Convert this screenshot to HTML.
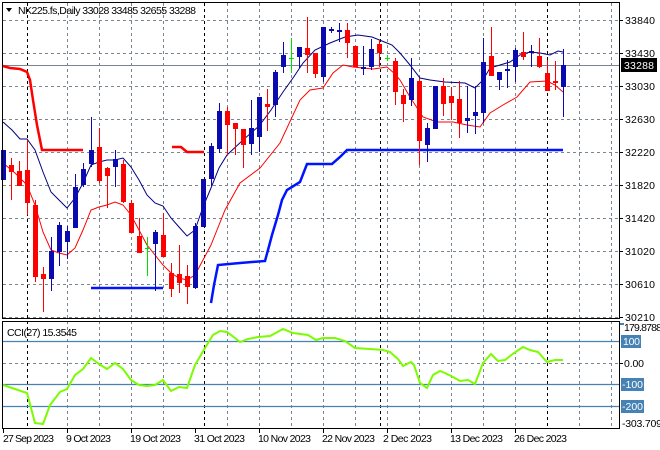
<!DOCTYPE html>
<html><head><meta charset="utf-8"><style>
html,body{margin:0;padding:0;background:#fff;}
svg{display:block;font-family:"Liberation Sans",sans-serif;font-size:10.5px;}
.g{stroke:#7a8590;stroke-width:1;stroke-dasharray:3,3;}
.k{stroke:#000;stroke-width:1;stroke-dasharray:3,3;}
.b{fill:#0a0ab0;}.r{fill:#ff0000;}
.wb{stroke:#0a0ab0;}.wr{stroke:#ff0000;}.wg{stroke:#00e000;}
</style></head><body>
<svg width="660" height="450" viewBox="0 0 660 450" xmlns="http://www.w3.org/2000/svg">
<rect width="660" height="450" fill="#fff"/>
<g class="g">
<line x1="3" y1="20.5" x2="619" y2="20.5"/><line x1="3" y1="53.5" x2="619" y2="53.5"/><line x1="3" y1="86.5" x2="619" y2="86.5"/><line x1="3" y1="119.5" x2="619" y2="119.5"/><line x1="3" y1="152.5" x2="619" y2="152.5"/><line x1="3" y1="185.5" x2="619" y2="185.5"/><line x1="3" y1="218.5" x2="619" y2="218.5"/><line x1="3" y1="251.5" x2="619" y2="251.5"/><line x1="3" y1="284.5" x2="619" y2="284.5"/><line x1="3" y1="317.5" x2="619" y2="317.5"/>
<line x1="3" y1="363.5" x2="619" y2="363.5"/>
</g>
<g class="g">
<line x1="67.5" y1="3" x2="67.5" y2="428"/><line x1="99.5" y1="3" x2="99.5" y2="428"/><line x1="131.5" y1="3" x2="131.5" y2="428"/><line x1="163.5" y1="3" x2="163.5" y2="428"/><line x1="227.5" y1="3" x2="227.5" y2="428"/><line x1="259.5" y1="3" x2="259.5" y2="428"/><line x1="291.5" y1="3" x2="291.5" y2="428"/><line x1="323.5" y1="3" x2="323.5" y2="428"/><line x1="355.5" y1="3" x2="355.5" y2="428"/><line x1="387.5" y1="3" x2="387.5" y2="428"/><line x1="419.5" y1="3" x2="419.5" y2="428"/><line x1="451.5" y1="3" x2="451.5" y2="428"/><line x1="483.5" y1="3" x2="483.5" y2="428"/><line x1="515.5" y1="3" x2="515.5" y2="428"/><line x1="579.5" y1="3" x2="579.5" y2="428"/><line x1="611.5" y1="3" x2="611.5" y2="428"/>
</g>
<g class="k">
<line x1="27.5" y1="3" x2="27.5" y2="428"/><line x1="204.5" y1="3" x2="204.5" y2="428"/><line x1="380.5" y1="3" x2="380.5" y2="428"/><line x1="547.5" y1="3" x2="547.5" y2="428"/>
</g>
<line x1="3" y1="65.5" x2="619" y2="65.5" stroke="#7a8590" stroke-width="1"/>
<g stroke="#4682b4" stroke-width="1.2">
<line x1="3" y1="341.5" x2="619" y2="341.5"/><line x1="3" y1="384.5" x2="619" y2="384.5"/><line x1="3" y1="406.5" x2="619" y2="406.5"/>
</g>
<polyline fill="none" stroke="#ff0000" stroke-width="2.5" points="3,66 10,68 20,69 27,72 30,80 33,100 37,125 42,150 83,150"/>
<polyline fill="none" stroke="#ff0000" stroke-width="2.5" points="172,147 181,147 187,152 204,152"/>
<polyline fill="none" stroke="#0014ff" stroke-width="2.5" points="91,288 163,288"/>
<polyline fill="none" stroke="#0014ff" stroke-width="2.5" points="211,303 214,285 218,265 240,263 265,261 268,250 272,235 278,215 282,200 287,190 300,182 307,164 332,164 340,157 347,150 563,150"/>
<polyline fill="none" stroke="#000080" stroke-width="1" points="3,122 12,130 20,139 27,139 35,150 43,172 51,192 59,200 67,208 75,198 83,183 91,165 99,162 107,160 115,160 123,158 131,167 139,180 147,195 155,203 163,206 171,218 179,227 187,236 195,230 203,207 211,188 219,168 227,155 243,140 259,126 271,110 283,92 293,78 303,63 315,50 330,43 345,37 358,35 372,37 382,41 392,45 400,53 410,65 420,78 430,80 445,82 465,83 475,88 483,80 490,68 500,65 510,62 520,55 530,52 540,53 550,55 558,51 563,52"/>
<polyline fill="none" stroke="#ff0000" stroke-width="1" points="3,163 15,173 27,185 35,205 43,232 51,250 59,253 67,255 75,248 83,230 91,210 99,207 107,205 115,202 123,205 131,215 139,230 147,245 155,255 163,265 171,273 179,278 187,280 195,275 203,260 211,245 219,225 225,210 240,183 260,168 280,143 300,100 310,90 323,88 333,73 343,65 353,67 373,69 387,67 395,74 400,80 410,97 423,117 437,122 453,122 467,125 480,127 490,113 503,105 517,97 530,82 547,81 555,85 563,92"/>
<g stroke-width="1">
<line class="wb" x1="3.5" y1="150" x2="3.5" y2="180"/><rect class="b" x="1" y="150" width="5" height="30"/>
<line class="wr" x1="11.5" y1="158" x2="11.5" y2="200"/><rect class="r" x="9" y="165" width="5" height="7"/>
<line class="wr" x1="19.5" y1="161" x2="19.5" y2="186"/><rect class="r" x="17" y="171" width="5" height="15"/>
<line class="wr" x1="27.5" y1="140" x2="27.5" y2="215"/><rect class="r" x="25" y="170" width="5" height="33"/>
<line class="wr" x1="35.5" y1="200" x2="35.5" y2="282"/><rect class="r" x="33" y="205" width="5" height="72"/>
<line class="wr" x1="43.5" y1="267" x2="43.5" y2="312"/><rect class="r" x="41" y="274" width="5" height="5"/>
<line class="wb" x1="51.5" y1="237" x2="51.5" y2="291"/><rect class="b" x="49" y="251" width="5" height="28"/>
<line class="wb" x1="59.5" y1="222" x2="59.5" y2="266"/><rect class="b" x="57" y="225" width="5" height="27"/>
<line class="wb" x1="67.5" y1="226" x2="67.5" y2="259"/><rect class="b" x="65" y="231" width="5" height="11"/>
<line class="wb" x1="75.5" y1="174" x2="75.5" y2="228"/><rect class="b" x="73" y="187" width="5" height="41"/>
<line class="wb" x1="83.5" y1="163" x2="83.5" y2="187"/><rect class="b" x="81" y="169" width="5" height="16"/>
<line class="wb" x1="91.5" y1="117" x2="91.5" y2="167"/><rect class="b" x="89" y="150" width="5" height="14"/>
<line class="wr" x1="99.5" y1="128" x2="99.5" y2="183"/><rect class="r" x="97" y="147" width="5" height="34"/>
<line class="wr" x1="107.5" y1="167" x2="107.5" y2="208"/><rect class="r" x="105" y="168" width="5" height="8"/>
<line class="wb" x1="115.5" y1="150" x2="115.5" y2="187"/><rect class="b" x="113" y="159" width="5" height="8"/>
<line class="wr" x1="123.5" y1="160" x2="123.5" y2="203"/><rect class="r" x="121" y="164" width="5" height="38"/>
<line class="wr" x1="131.5" y1="200" x2="131.5" y2="233"/><rect class="r" x="129" y="203" width="5" height="30"/>
<line class="wr" x1="139.5" y1="218" x2="139.5" y2="253"/><rect class="r" x="137" y="236" width="5" height="17"/>
<line class="wg" x1="147.5" y1="237" x2="147.5" y2="276"/><line class="wg" x1="145" y1="248.5" x2="150" y2="248.5"/>
<line class="wb" x1="155.5" y1="230" x2="155.5" y2="291"/><rect class="b" x="153" y="232" width="5" height="12"/>
<line class="wr" x1="163.5" y1="213" x2="163.5" y2="257"/><rect class="r" x="161" y="235" width="5" height="22"/>
<line class="wr" x1="171.5" y1="263" x2="171.5" y2="297"/><rect class="r" x="169" y="273" width="5" height="16"/>
<line class="wr" x1="179.5" y1="245" x2="179.5" y2="293"/><rect class="r" x="177" y="274" width="5" height="9"/>
<line class="wr" x1="187.5" y1="265" x2="187.5" y2="304"/><rect class="r" x="185" y="276" width="5" height="11"/>
<line class="wb" x1="195.5" y1="223" x2="195.5" y2="289"/><rect class="b" x="193" y="226" width="5" height="62"/>
<line class="wb" x1="203.5" y1="179" x2="203.5" y2="227"/><rect class="b" x="201" y="179" width="5" height="48"/>
<line class="wb" x1="211.5" y1="143" x2="211.5" y2="187"/><rect class="b" x="209" y="146" width="5" height="33"/>
<line class="wb" x1="219.5" y1="103" x2="219.5" y2="153"/><rect class="b" x="217" y="111" width="5" height="38"/>
<line class="wr" x1="227.5" y1="107" x2="227.5" y2="155"/><rect class="r" x="225" y="111" width="5" height="14"/>
<line class="wr" x1="235.5" y1="123" x2="235.5" y2="155"/><rect class="r" x="233" y="123" width="5" height="6"/>
<line class="wr" x1="243.5" y1="129" x2="243.5" y2="168"/><rect class="r" x="241" y="129" width="5" height="16"/>
<line class="wb" x1="251.5" y1="100" x2="251.5" y2="155"/><rect class="b" x="249" y="128" width="5" height="16"/>
<line class="wb" x1="259.5" y1="97" x2="259.5" y2="152"/><rect class="b" x="257" y="97" width="5" height="40"/>
<line class="wr" x1="267.5" y1="89" x2="267.5" y2="131"/><rect class="r" x="265" y="104" width="5" height="3"/>
<line class="wb" x1="275.5" y1="70" x2="275.5" y2="117"/><rect class="b" x="273" y="72" width="5" height="33"/>
<line class="wb" x1="283.5" y1="42" x2="283.5" y2="73"/><rect class="b" x="281" y="55" width="5" height="12"/>
<line class="wg" x1="291.5" y1="38" x2="291.5" y2="73"/><line class="wg" x1="289" y1="58.5" x2="294" y2="58.5"/>
<line class="wb" x1="299.5" y1="47" x2="299.5" y2="68"/><rect class="b" x="297" y="47" width="5" height="10"/>
<line class="wr" x1="307.5" y1="17" x2="307.5" y2="73"/><rect class="r" x="305" y="48" width="5" height="7"/>
<line class="wr" x1="315.5" y1="53" x2="315.5" y2="78"/><rect class="r" x="313" y="53" width="5" height="21"/>
<line class="wb" x1="323.5" y1="27" x2="323.5" y2="82"/><rect class="b" x="321" y="27" width="5" height="50"/>
<line class="wb" x1="331.5" y1="27" x2="331.5" y2="33"/><rect class="b" x="329" y="29" width="5" height="2"/>
<line class="wb" x1="339.5" y1="23" x2="339.5" y2="42"/><rect class="b" x="337" y="30" width="5" height="2"/>
<line class="wr" x1="347.5" y1="23" x2="347.5" y2="58"/><rect class="r" x="345" y="30" width="5" height="13"/>
<line class="wr" x1="355.5" y1="46" x2="355.5" y2="67"/><rect class="r" x="353" y="46" width="5" height="21"/>
<line class="wb" x1="363.5" y1="46" x2="363.5" y2="75"/><rect class="b" x="361" y="67" width="5" height="2"/>
<line class="wb" x1="371.5" y1="39" x2="371.5" y2="70"/><rect class="b" x="369" y="49" width="5" height="18"/>
<line class="wr" x1="379.5" y1="40" x2="379.5" y2="67"/><rect class="r" x="377" y="44" width="5" height="9"/>
<line class="wg" x1="387.5" y1="55" x2="387.5" y2="61"/><line class="wg" x1="385" y1="58.5" x2="390" y2="58.5"/>
<line class="wr" x1="395.5" y1="58" x2="395.5" y2="105"/><rect class="r" x="393" y="61" width="5" height="31"/>
<line class="wr" x1="403.5" y1="89" x2="403.5" y2="122"/><rect class="r" x="401" y="95" width="5" height="9"/>
<line class="wb" x1="411.5" y1="58" x2="411.5" y2="106"/><rect class="b" x="409" y="78" width="5" height="22"/>
<line class="wr" x1="419.5" y1="78" x2="419.5" y2="165"/><rect class="r" x="417" y="81" width="5" height="60"/>
<line class="wb" x1="427.5" y1="123" x2="427.5" y2="162"/><rect class="b" x="425" y="128" width="5" height="17"/>
<line class="wb" x1="435.5" y1="86" x2="435.5" y2="129"/><rect class="b" x="433" y="86" width="5" height="43"/>
<line class="wr" x1="443.5" y1="78" x2="443.5" y2="116"/><rect class="r" x="441" y="86" width="5" height="18"/>
<line class="wr" x1="451.5" y1="87" x2="451.5" y2="120"/><rect class="r" x="449" y="96" width="5" height="7"/>
<line class="wr" x1="459.5" y1="81" x2="459.5" y2="138"/><rect class="r" x="457" y="99" width="5" height="24"/>
<line class="wb" x1="467.5" y1="86" x2="467.5" y2="133"/><rect class="b" x="465" y="118" width="5" height="3"/>
<line class="wb" x1="475.5" y1="86" x2="475.5" y2="134"/><rect class="b" x="473" y="112" width="5" height="4"/>
<line class="wb" x1="483.5" y1="38" x2="483.5" y2="123"/><rect class="b" x="481" y="62" width="5" height="51"/>
<line class="wr" x1="491.5" y1="27" x2="491.5" y2="76"/><rect class="r" x="489" y="56" width="5" height="20"/>
<line class="wb" x1="499.5" y1="72" x2="499.5" y2="90"/><rect class="b" x="497" y="72" width="5" height="8"/>
<line class="wb" x1="507.5" y1="60" x2="507.5" y2="88"/><rect class="b" x="505" y="69" width="5" height="2"/>
<line class="wb" x1="515.5" y1="48" x2="515.5" y2="82"/><rect class="b" x="513" y="50" width="5" height="17"/>
<line class="wr" x1="523.5" y1="32" x2="523.5" y2="60"/><rect class="r" x="521" y="52" width="5" height="5"/>
<line class="wb" x1="531.5" y1="45" x2="531.5" y2="67"/><rect class="b" x="529" y="51" width="5" height="2"/>
<line class="wr" x1="539.5" y1="38" x2="539.5" y2="68"/><rect class="r" x="537" y="56" width="5" height="11"/>
<line class="wr" x1="547.5" y1="60" x2="547.5" y2="91"/><rect class="r" x="545" y="73" width="5" height="18"/>
<line class="wr" x1="555.5" y1="61" x2="555.5" y2="90"/><rect class="r" x="553" y="81" width="5" height="2"/>
<line class="wb" x1="563.5" y1="49" x2="563.5" y2="117"/><rect class="b" x="561" y="65" width="5" height="22"/>
</g>
<polyline fill="none" stroke="#7cfc00" stroke-width="2" points="3,385 15,389 27,393 35,423 43,424 50,405 60,392 67,389 75,375 83,369 91,358 99,364 107,369 115,363 123,369 131,380 139,385 147,386 155,385 163,380 171,391 179,387 187,388 195,365 205,348 213,335 220,331 227,332 235,338 240,342 248,339 258,337 270,336 283,329 293,333 308,335 316,340 323,338 335,338 345,341 355,348 370,349 383,350 390,352 398,359 403,366 411,362 414,365 420,383 427,388 433,375 440,371 445,373 453,377 460,381 468,380 475,384 483,363 491,354 498,361 505,360 514,353 523,347 530,350 538,352 547,362 555,360 563,360"/>
<g fill="none" stroke="#000" stroke-width="1">
<rect x="2.5" y="2.5" width="617" height="316"/>
<rect x="2.5" y="321.5" width="617" height="107"/>
</g>
<g stroke="#000">
<line x1="619" y1="20.5" x2="623" y2="20.5"/><line x1="619" y1="53.5" x2="623" y2="53.5"/><line x1="619" y1="86.5" x2="623" y2="86.5"/><line x1="619" y1="119.5" x2="623" y2="119.5"/><line x1="619" y1="152.5" x2="623" y2="152.5"/><line x1="619" y1="185.5" x2="623" y2="185.5"/><line x1="619" y1="218.5" x2="623" y2="218.5"/><line x1="619" y1="251.5" x2="623" y2="251.5"/><line x1="619" y1="284.5" x2="623" y2="284.5"/><line x1="619" y1="317.5" x2="623" y2="317.5"/>
<line x1="619" y1="363.5" x2="623" y2="363.5"/>
</g>
<g fill="#000">
<text x="625" y="24" textLength="30">33840</text><text x="625" y="57" textLength="30">33430</text><text x="625" y="90" textLength="30">33030</text><text x="625" y="123" textLength="30">32630</text><text x="625" y="156" textLength="30">32220</text><text x="625" y="189" textLength="30">31820</text><text x="625" y="222" textLength="30">31420</text><text x="625" y="255" textLength="30">31020</text><text x="625" y="288" textLength="30">30610</text><text x="625" y="321" textLength="30">30210</text>
</g>
<rect x="621" y="58" width="36" height="14" fill="#000"/>
<text x="624" y="69" fill="#fff" textLength="30">33288</text>
<rect x="620" y="323" width="4" height="2" fill="#4682b4"/>
<text x="624" y="331" fill="#000" textLength="38">179.8788</text>
<rect x="621" y="335" width="20" height="13" fill="#4682b4"/><text x="623" y="345" fill="#fff" textLength="17">100</text>
<text x="624" y="367" fill="#000" textLength="20">0.00</text>
<rect x="621" y="378" width="23" height="13" fill="#4682b4"/><text x="622" y="388" fill="#fff" textLength="21">-100</text>
<rect x="621" y="400" width="23" height="13" fill="#4682b4"/><text x="622" y="410" fill="#fff" textLength="21">-200</text>
<text x="622" y="427" fill="#000" textLength="40">-303.709</text>
<path d="M6,8 L12,8 L9,12 Z" fill="#000"/>
<text x="18" y="14" fill="#000" textLength="178">NK225.fs,Daily  33028 33485 32655 33288</text>
<text x="7" y="336" fill="#000" textLength="70">CCI(27) 15.3545</text>
<g stroke="#000">
<line x1="3.5" y1="428" x2="3.5" y2="433"/><line x1="67.5" y1="428" x2="67.5" y2="433"/><line x1="131.5" y1="428" x2="131.5" y2="433"/><line x1="195.5" y1="428" x2="195.5" y2="433"/><line x1="259.5" y1="428" x2="259.5" y2="433"/><line x1="323.5" y1="428" x2="323.5" y2="433"/><line x1="387.5" y1="428" x2="387.5" y2="433"/><line x1="451.5" y1="428" x2="451.5" y2="433"/><line x1="515.5" y1="428" x2="515.5" y2="433"/>
</g>
<g fill="#000">
<text x="3" y="442" textLength="51">27 Sep 2023</text><text x="66" y="442" textLength="45">9 Oct 2023</text><text x="130" y="442" textLength="51">19 Oct 2023</text><text x="194" y="442" textLength="51">31 Oct 2023</text><text x="258" y="442" textLength="53">10 Nov 2023</text><text x="322" y="442" textLength="53">22 Nov 2023</text><text x="383" y="442" textLength="49">2 Dec 2023</text><text x="450" y="442" textLength="53">13 Dec 2023</text><text x="514" y="442" textLength="53">26 Dec 2023</text>
</g>
</svg>
</body></html>
